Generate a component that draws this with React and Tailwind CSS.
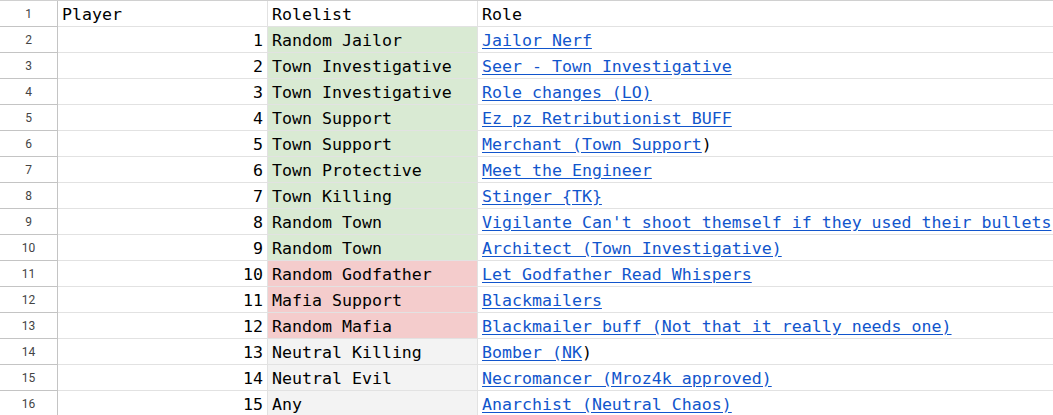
const rows = [
  { n: 1, list: 'Random Jailor', tone: 'town', role: 'Jailor Nerf' },
  { n: 2, list: 'Town Investigative', tone: 'town', role: 'Seer - Town Investigative' },
  { n: 3, list: 'Town Investigative', tone: 'town', role: 'Role changes (LO)' },
  { n: 4, list: 'Town Support', tone: 'town', role: 'Ez pz Retributionist BUFF' },
  { n: 5, list: 'Town Support', tone: 'town', role: 'Merchant (Town Support', tail: ')' },
  { n: 6, list: 'Town Protective', tone: 'town', role: 'Meet the Engineer' },
  { n: 7, list: 'Town Killing', tone: 'town', role: 'Stinger {TK}' },
  { n: 8, list: 'Random Town', tone: 'town', role: "Vigilante Can't shoot themself if they used their bullets" },
  { n: 9, list: 'Random Town', tone: 'town', role: 'Architect (Town Investigative)' },
  { n: 10, list: 'Random Godfather', tone: 'mafia', role: 'Let Godfather Read Whispers' },
  { n: 11, list: 'Mafia Support', tone: 'mafia', role: 'Blackmailers' },
  { n: 12, list: 'Random Mafia', tone: 'mafia', role: 'Blackmailer buff (Not that it really needs one)' },
  { n: 13, list: 'Neutral Killing', tone: 'neutral', role: 'Bomber (NK', tail: ')' },
  { n: 14, list: 'Neutral Evil', tone: 'neutral', role: 'Necromancer (Mroz4k approved)' },
  { n: 15, list: 'Any', tone: 'neutral', role: 'Anarchist (Neutral Chaos)' }
]

const toneBg = {
  town: 'bg-[#d9ead3]',
  mafia: 'bg-[#f4cccc]',
  neutral: 'bg-[#f3f3f3]'
}

const mono = "font-['DejaVu_Sans_Mono',monospace] text-[16.6px] text-black pt-[3px]"

function RowHead({ children }) {
  return (
    <div className="flex items-center justify-center pt-[1px] border-r border-b border-[#c4c4c4] font-['Roboto',sans-serif] text-[12px] text-[#444]">
      {children}
    </div>
  )
}

export default function App() {
  return (
    <div className="w-[1053px] h-[415px] overflow-hidden bg-white border-t border-[#d0d0d0]">
      <div className="grid grid-cols-[58px_210px_210px_1fr] auto-rows-[26px]">
        <RowHead>1</RowHead>
        <div className={`flex items-center px-1 border-r border-b border-[#e2e2e2] ${mono}`}>Player</div>
        <div className={`flex items-center px-1 border-r border-b border-[#e2e2e2] ${mono}`}>Rolelist</div>
        <div className={`flex items-center px-1 border-b border-[#e2e2e2] ${mono}`}>Role</div>

        {rows.map((r) => (
          <div key={r.n} className="contents">
            <RowHead>{r.n + 1}</RowHead>
            <div className={`flex items-center justify-end px-1 border-r border-b border-[#e2e2e2] ${mono}`}>{r.n}</div>
            <div className={`flex items-center px-1 border-r border-b border-[#e2e2e2] ${toneBg[r.tone]} ${mono}`}>{r.list}</div>
            <div className={`flex items-center px-1 border-b border-[#e2e2e2] whitespace-pre ${mono}`}>
              <span className="text-[#1155cc] underline underline-offset-[2px]">{r.role}</span>
              {r.tail}
            </div>
          </div>
        ))}
      </div>
    </div>
  )
}
